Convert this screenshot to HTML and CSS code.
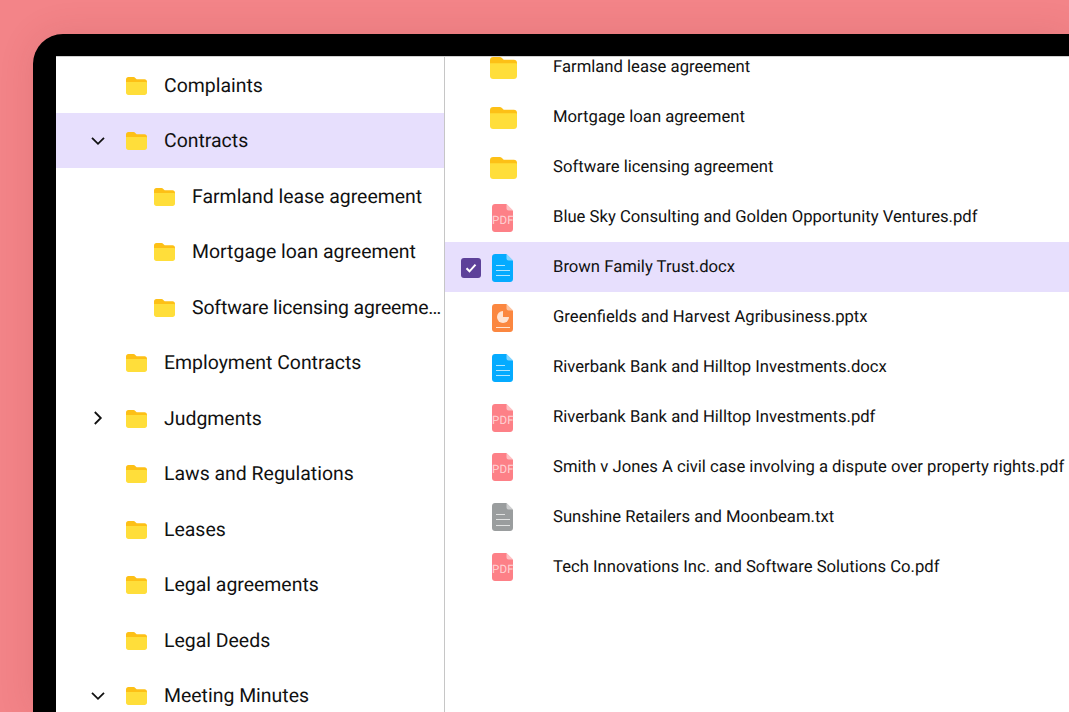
FILE: index.html
```html
<!DOCTYPE html>
<html lang="en">
<head>
<meta charset="utf-8">
<title>Documents</title>
<link rel="stylesheet" href="styles.css">
</head>
<body>
<svg class="defs" width="0" height="0" aria-hidden="true">
  <symbol id="folder" viewBox="1 1.200 26 21.800" preserveAspectRatio="none">
    <path d="M1 4.200C1 2.400 2.200 1.200 4 1.200h6.200c1 0 1.700.4 2.300 1.100L14.200 4H24c1.700 0 3 1.300 3 3v2H1z" fill="#fdc016"/>
    <path d="M1 7.400h25c.6 0 1 .4 1 1V20c0 1.700-1.300 3-3 3H4c-1.700 0-3-1.300-3-3z" fill="#ffde3a"/>
  </symbol>
  <symbol id="sheet" viewBox="0 0 21 28" preserveAspectRatio="none">
    <path d="M3 0h11.500L21 6.500V25c0 1.700-1.300 3-3 3H3c-1.700 0-3-1.300-3-3V3c0-1.700 1.300-3 3-3z" fill="currentColor"/>
    <path d="M14.500 0L21 6.500h-4.500c-1.100 0-2-.9-2-2z" fill="#fff" fill-opacity=".5"/>
  </symbol>
  <symbol id="chev-down" viewBox="0 0 16 16"><path d="M2 4.800l6 6 6-6" fill="none" stroke="#111" stroke-width="1.800"/></symbol>
  <symbol id="chev-right" viewBox="0 0 16 16"><path d="M4.800 2l6 6-6 6" fill="none" stroke="#111" stroke-width="1.800"/></symbol>
</svg>
<main class="frame">
  <div class="screen">
    <nav class="tree">
      <div class="node"><span class="twist"></span><svg class="folder-s"><use href="#folder"/></svg><span class="name">Complaints</span></div>
      <div class="node selected"><svg class="twist"><use href="#chev-down"/></svg><svg class="folder-s"><use href="#folder"/></svg><span class="name">Contracts</span></div>
      <div class="node child"><span class="twist"></span><svg class="folder-s"><use href="#folder"/></svg><span class="name">Farmland lease agreement</span></div>
      <div class="node child"><span class="twist"></span><svg class="folder-s"><use href="#folder"/></svg><span class="name">Mortgage loan agreement</span></div>
      <div class="node child"><span class="twist"></span><svg class="folder-s"><use href="#folder"/></svg><span class="name tight">Software licensing agreement</span></div>
      <div class="node"><span class="twist"></span><svg class="folder-s"><use href="#folder"/></svg><span class="name">Employment Contracts</span></div>
      <div class="node"><svg class="twist"><use href="#chev-right"/></svg><svg class="folder-s"><use href="#folder"/></svg><span class="name">Judgments</span></div>
      <div class="node"><span class="twist"></span><svg class="folder-s"><use href="#folder"/></svg><span class="name">Laws and Regulations</span></div>
      <div class="node"><span class="twist"></span><svg class="folder-s"><use href="#folder"/></svg><span class="name">Leases</span></div>
      <div class="node"><span class="twist"></span><svg class="folder-s"><use href="#folder"/></svg><span class="name">Legal agreements</span></div>
      <div class="node"><span class="twist"></span><svg class="folder-s"><use href="#folder"/></svg><span class="name">Legal Deeds</span></div>
      <div class="node"><svg class="twist"><use href="#chev-down"/></svg><svg class="folder-s"><use href="#folder"/></svg><span class="name">Meeting Minutes</span></div>
    </nav>
    <section class="files">
      <div class="file"><span class="check"></span><svg class="folder-l"><use href="#folder"/></svg><span>Farmland lease agreement</span></div>
      <div class="file"><span class="check"></span><svg class="folder-l"><use href="#folder"/></svg><span>Mortgage loan agreement</span></div>
      <div class="file"><span class="check"></span><svg class="folder-l"><use href="#folder"/></svg><span>Software licensing agreement</span></div>
      <div class="file"><span class="check"></span><span class="doc pdf"><svg><use href="#sheet"/></svg><b>PDF</b></span><span>Blue Sky Consulting and Golden Opportunity Ventures.pdf</span></div>
      <div class="file selected"><span class="check on"><svg viewBox="0 0 20 20"><path d="M5.500 10.300l3 3 6-6.600" fill="none" stroke="#fff" stroke-width="2"/></svg></span><span class="doc word"><svg><use href="#sheet"/></svg><i></i></span><span>Brown Family Trust.docx</span></div>
      <div class="file"><span class="check"></span><span class="doc slides"><svg><use href="#sheet"/></svg><u></u></span><span>Greenfields and Harvest Agribusiness.pptx</span></div>
      <div class="file"><span class="check"></span><span class="doc word"><svg><use href="#sheet"/></svg><i></i></span><span>Riverbank Bank and Hilltop Investments.docx</span></div>
      <div class="file"><span class="check"></span><span class="doc pdf"><svg><use href="#sheet"/></svg><b>PDF</b></span><span>Riverbank Bank and Hilltop Investments.pdf</span></div>
      <div class="file"><span class="check"></span><span class="doc pdf"><svg><use href="#sheet"/></svg><b>PDF</b></span><span>Smith v Jones A civil case involving a dispute over property rights.pdf</span></div>
      <div class="file"><span class="check"></span><span class="doc text"><svg><use href="#sheet"/></svg><i></i></span><span>Sunshine Retailers and Moonbeam.txt</span></div>
      <div class="file"><span class="check"></span><span class="doc pdf"><svg><use href="#sheet"/></svg><b>PDF</b></span><span>Tech Innovations Inc. and Software Solutions Co.pdf</span></div>
    </section>
  </div>
</main>
</body>
</html>
```
FILE: styles.css
```css
* { box-sizing: border-box; }
html, body { margin: 0; height: 100%; }
body {
  overflow: hidden;
  background: #f38488;
  font-family: Roboto, "Liberation Sans", sans-serif;
  color: #111;
  padding: 34px 0 0 33px;
  text-rendering: geometricPrecision;
}
.defs { position: absolute; }
.frame {
  height: 100%;
  background: #000;
  border-radius: 30px 0 0 0;
  padding: 22px 0 0 23px;
  box-shadow: 0 0 36px rgba(120, 30, 30, .12);
}
.screen {
  display: flex;
  height: 100%;
  background: #fff;
  border-top: 1px solid #cfcfcf;
  overflow: hidden;
}
.tree {
  flex: 0 0 389px;
  padding-top: .25px;
  border-right: 1px solid #c6c6c6;
  overflow: hidden;
}
.node {
  display: flex;
  align-items: center;
  height: 55.500px;
  padding-left: 34px;
  font-size: 19.440px;
}
.node.child { padding-left: 62px; }
.node.selected, .file.selected { background: #e7dffd; }
.twist { flex: 0 0 16px; width: 16px; height: 16px; margin-right: 20px; }
.folder-s { flex: 0 0 21px; width: 21px; height: 18px; margin-top: 1px; margin-right: 17px; }
.name { padding-top: .5px; white-space: nowrap; overflow: hidden; text-overflow: ellipsis; }
.name.tight { letter-spacing: -.15px; }
.files { flex: 1; min-width: 0; margin-top: -14.500px; font-size: 16.670px; }
.file {
  display: flex;
  align-items: center;
  height: 49.950px;
  padding: 1px 0 0 16px;
  white-space: nowrap;
}
.check { flex: 0 0 20px; width: 20px; height: 20px; margin-right: 9px; border-radius: 3px; }
.check.on { background: #5d4199; }
.check svg { display: block; width: 20px; height: 20px; }
.folder-l { flex: 0 0 27px; width: 27px; height: 22px; margin-right: 36px; }
.doc { position: relative; flex: 0 0 21px; width: 21px; height: 28px; margin: 0 40px 0 2px; }
.doc svg { display: block; width: 21px; height: 28px; }
.pdf { color: #fd8087; }
.word { color: #05abff; }
.slides { color: #fb8740; }
.text { color: #9a9d9e; }
.doc b {
  position: absolute;
  left: 0; right: 0; top: 10px;
  font: 400 11.500px/13px "Roboto", sans-serif;
  letter-spacing: .2px;
  text-align: center;
  color: #ffd3d5;
}
.doc i {
  position: absolute;
  left: 4px; right: 3px; top: 16px;
  height: 6.500px;
  border-top: 1.500px solid rgba(255,255,255,.7);
  border-bottom: 1.500px solid rgba(255,255,255,.7);
}
.doc i::before {
  content: "";
  position: absolute;
  left: 0; right: 5px; top: -6px;
  border-top: 1.500px solid rgba(255,255,255,.7);
}
.doc u {
  position: absolute;
  left: 4.500px; top: 7.500px;
  width: 12px; height: 12px;
  border-radius: 50%;
  background: conic-gradient(#fb8740 0 25%, #ffe3d2 25%);
}
.doc u::after {
  content: "";
  position: absolute;
  left: -1px; right: -1px; top: 15.500px;
  border-top: 1.500px solid #ffe3d2;
}
```
